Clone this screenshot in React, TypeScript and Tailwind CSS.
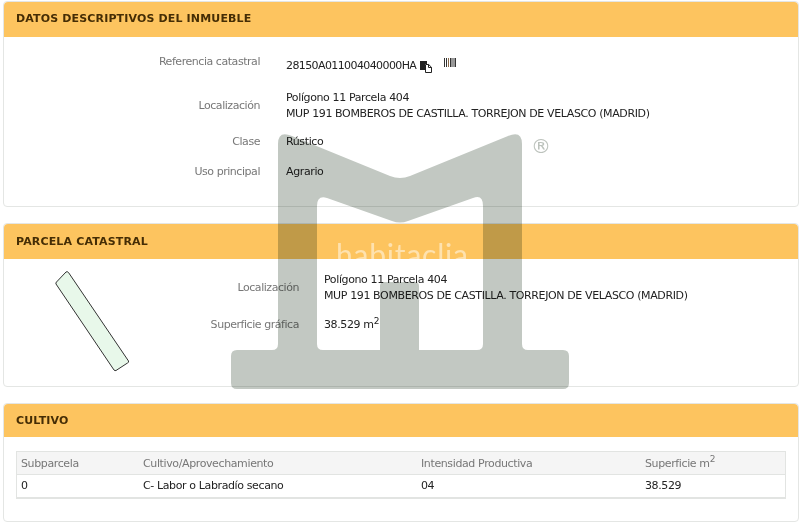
const font = { fontFamily: '"DejaVu Sans", Verdana, sans-serif' }

function Panel({ title, headerClass, bodyClass, children }: { title: string; headerClass: string; bodyClass: string; children: React.ReactNode }) {
  return (
    <section className="mx-[3px] mr-px rounded-sm border border-[#e4e6e4] bg-white">
      <h2 className={`flex items-center rounded-t-sm bg-[#fdc45f] pl-3 text-[11px] font-bold tracking-[0.15px] text-[#452d05] ${headerClass}`}>
        {title}
      </h2>
      <div className={bodyClass}>{children}</div>
    </section>
  )
}

function CopyIcon() {
  return (
    <svg width="12" height="13" viewBox="0 0 12 13" className="ml-1 mt-[2px]">
      <path d="M0 1h7v3H5v6H0z" fill="#222" />
      <path d="M5.500 4.500h3.200l2.800 2.800v5.200h-6z" fill="#fff" stroke="#222" />
      <path d="M8.500 4.500v3h3" fill="none" stroke="#222" />
    </svg>
  )
}

function BarcodeIcon() {
  const bars = [0, 2, 4, 6, 7.5, 9.5, 11]
  return (
    <svg width="12" height="9" viewBox="0 0 12 9" className="ml-3">
      {bars.map(x => (
        <rect key={x} x={x} y="0" width="1" height="9" fill={x === 4 ? '#8a6a4a' : '#333'} />
      ))}
    </svg>
  )
}

function Parcel() {
  return (
    <svg width="80" height="106" viewBox="0 0 80 106" className="shrink-0">
      <path
        d="M11 1 Q12 0 13.500 1.500 L73.500 90 Q74 91.500 72.500 92 L61 99.500 Q60 100 59 99 L1 13 Q0.500 12 1.500 11 Z"
        fill="#e8f8ea"
        stroke="#333"
        strokeWidth="1"
      />
    </svg>
  )
}

function Watermark() {
  return (
    <div className="pointer-events-none absolute inset-0 overflow-hidden">
      <svg width="800" height="524" viewBox="0 0 800 524" className="absolute left-0 top-0 mix-blend-multiply">
        <path
          fillRule="evenodd"
          fill="#c2c8c2"
          d="M292 136 Q278 130 278 144 L278 344 Q278 350 272 350 L237 350 Q231 350 231 356 L231 383 Q231 389 237 389 L563 389 Q569 389 569 383 L569 356 Q569 350 563 350 L528 350 Q522 350 522 344 L522 144 Q522 130 508 136 L410 176 Q400 180 390 176 Z
             M327 198 L392 221 Q400 224 408 221 L473 198 Q483 194 483 206 L483 344 Q483 350 477 350 L419 350 L419 286 Q419 282 415 282 L384 282 Q380 282 380 286 L380 350 L323 350 Q317 350 317 344 L317 206 Q317 195 327 198 Z"
        />
      </svg>
      <span className="absolute left-[531px] top-[132px] text-[20px] leading-7 text-[#bcc2bc]">®</span>
      <span className="absolute left-[336px] top-[240px] text-[30px] leading-[28px] tracking-[0.8px] text-white/50" style={{ fontFamily: 'Lato, sans-serif' }}>
        habitaclia
      </span>
    </div>
  )
}

function Label({ className, children }: { className: string; children: React.ReactNode }) {
  return <div className={`shrink-0 text-right tracking-[-0.45px] text-[#777] ${className}`}>{children}</div>
}

export default function App() {
  return (
    <div className="relative h-[524px] w-[800px] overflow-hidden bg-white pt-px text-[11px] leading-[16px] tracking-[-0.38px] text-[#222]" style={font}>
      <Panel title="DATOS DESCRIPTIVOS DEL INMUEBLE" headerClass="h-[35px] pb-px" bodyClass="h-[169px] pt-[17px]">
        <div className="flex">
          <Label className="w-[256px]">Referencia catastral</Label>
          <div className="ml-[26px] mt-1 flex items-start">
            <span className="tracking-[-0.6px]">28150A011004040000HA</span>
            <CopyIcon />
            <BarcodeIcon />
          </div>
        </div>
        <div className="mt-[16px] flex items-center">
          <Label className="w-[256px]">Localización</Label>
          <div className="ml-[26px]">
            <p>Polígono 11 Parcela 404</p>
            <p>MUP 191 BOMBEROS DE CASTILLA. TORREJON DE VELASCO (MADRID)</p>
          </div>
        </div>
        <div className="mt-[12px] flex">
          <Label className="w-[256px]">Clase</Label>
          <div className="ml-[26px]">Rústico</div>
        </div>
        <div className="mt-[14px] flex">
          <Label className="w-[256px]">Uso principal</Label>
          <div className="ml-[26px]">Agrario</div>
        </div>
      </Panel>

      <div className="h-[16px]" />

      <Panel title="PARCELA CATASTRAL" headerClass="h-[35px]" bodyClass="flex h-[127px] pl-[51px] pt-[12px]">
        <Parcel />
        <div className="ml-[-131px] pt-[1px]">
          <div className="flex items-center">
            <Label className="ml-[131px] w-[164px]">Localización</Label>
            <div className="ml-[25px]">
              <p>Polígono 11 Parcela 404</p>
              <p>MUP 191 BOMBEROS DE CASTILLA. TORREJON DE VELASCO (MADRID)</p>
            </div>
          </div>
          <div className="mt-[13px] flex">
            <Label className="ml-[131px] w-[164px]">Superficie gráfica</Label>
            <div className="ml-[25px]">
              38.529 m<sup className="text-[9px]">2</sup>
            </div>
          </div>
        </div>
      </Panel>

      <div className="h-[16px]" />

      <Panel title="CULTIVO" headerClass="h-[33px] pt-px" bodyClass="h-[84px] pl-3 pr-3 pt-[14px]">
        <div className="w-[770px] border border-b-2 border-[#e2e4e2]">
          <div className="grid h-[23px] grid-cols-[122px_278px_224px_1fr] items-center border-b border-[#e2e4e2] bg-[#f5f5f5] pl-[4px] pt-px text-[#777]">
            <span>Subparcela</span>
            <span>Cultivo/Aprovechamiento</span>
            <span>Intensidad Productiva</span>
            <span>
              Superficie m<sup className="text-[9px]">2</sup>
            </span>
          </div>
          <div className="grid h-[22px] grid-cols-[122px_278px_224px_1fr] items-center pl-[4px]">
            <span>0</span>
            <span>C- Labor o Labradío secano</span>
            <span>04</span>
            <span>38.529</span>
          </div>
        </div>
      </Panel>

      <Watermark />
    </div>
  )
}
